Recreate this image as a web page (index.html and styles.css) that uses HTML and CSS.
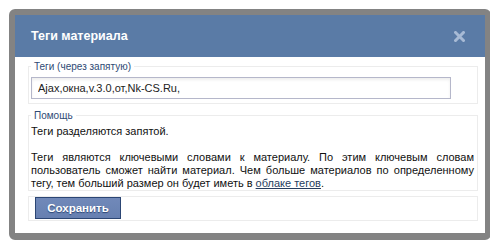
FILE: index.html
```html
<!DOCTYPE html>
<html lang="ru">
<head>
    <meta charset="UTF-8">
    <title>Теги материала</title>
    <link rel="stylesheet" href="styles.css">
</head>
<body>
    <div class="dialog">
        <div class="dialog-head">
            <span class="dialog-title">Теги материала</span>
            <span class="dialog-close" title="Закрыть">
                <svg width="11" height="11" viewBox="0 0 11 11">
                    <path d="M1.5 1.5 L9.5 9.5 M9.5 1.5 L1.5 9.5" stroke="#a7bad5" stroke-width="3" stroke-linecap="square"/>
                </svg>
            </span>
        </div>
        <div class="dialog-body">
            <fieldset class="box tags">
                <legend>Теги (через запятую)</legend>
                <input type="text" class="tags-input" value="Ajax,окна,v.3.0,от,Nk-CS.Ru,">
            </fieldset>
            <fieldset class="box help">
                <legend>Помощь</legend>
                <p>Теги разделяются запятой.</p>
                <p>Теги являются ключевыми словами к материалу. По этим ключевым словам пользователь сможет найти материал. Чем больше материалов по определенному тегу, тем больший размер он будет иметь в <a href="#">облаке тегов</a>.</p>
            </fieldset>
            <fieldset class="box buttons">
                <button type="button">Сохранить</button>
            </fieldset>
        </div>
    </div>
</body>
</html>
```

FILE: styles.css
```css
body {
    margin: 9px;
    background: #fff;
    font-family: "Liberation Sans", Arial, sans-serif;
    font-size: 11px;
    color: #111;
}
.dialog {
    width: 470px;
    border: 6px solid #838383;
    border-bottom-width: 7px;
    border-radius: 6px;
    background: #fff;
}
.dialog-head {
    height: 42px;
    background: #5a7ba6;
    display: flex;
    align-items: center;
    justify-content: space-between;
    padding: 0 20px 0 16px;
}
.dialog-title {
    color: #fff;
    font-size: 12.5px;
    font-weight: bold;
}
.dialog-close {
    display: flex;
    width: 11px;
    height: 11px;
    cursor: pointer;
}
.dialog-body {
    padding: 0 7px 12px 13px;
}
.box {
    margin: 5px 0 0 0;
    padding: 0 3px 0 2px;
    border: 1px solid #ececec;
    min-width: 0;
}
.box.tags {
    margin-top: 3px;
}
.box legend {
    padding: 0 3px;
    color: #2e4a74;
    font-size: 10px;
    line-height: 13px;
}
.tags-input {
    display: block;
    box-sizing: border-box;
    width: 420px;
    height: 22px;
    margin: 4px 0 4px 0;
    padding: 0 6px;
    border: 1px solid #b5b7ca;
    background: #fff;
    box-shadow: inset 0 2px 3px rgba(0, 0, 0, 0.07);
    font-family: "Liberation Sans", Arial, sans-serif;
    font-size: 11px;
    color: #222;
}
.help p {
    margin: 0;
    line-height: 13px;
    text-align: justify;
}
.help p + p {
    margin-top: 13px;
}
.help {
    padding-top: 3px;
    padding-bottom: 0;
}
.help a {
    color: #263c5e;
}
.box.buttons {
    margin-top: 5px;
    padding: 0 6px 1px 6px;
}
button {
    display: block;
    width: 86px;
    height: 22px;
    margin-top: 0;
    padding: 0;
    border: 1px solid #2c4674;
    background: linear-gradient(#7189b9, #6780b1);
    color: #fff;
    font-family: "Liberation Sans", Arial, sans-serif;
    font-size: 11.5px;
    font-weight: bold;
    text-shadow: 0 1px 1px #2c4674;
    cursor: pointer;
}
```
